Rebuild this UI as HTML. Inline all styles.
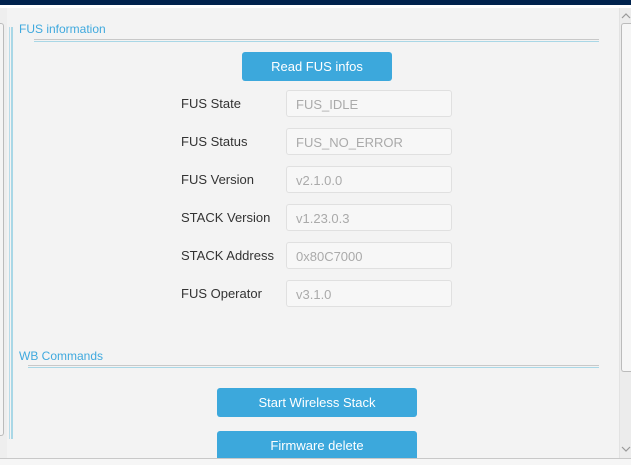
<!DOCTYPE html>
<html><head><style>
*{margin:0;padding:0;box-sizing:border-box}
body{width:631px;height:465px;overflow:hidden;background:#f3f3f3;font-family:"Liberation Sans",sans-serif;position:relative}
.a{position:absolute}
.lbl{position:absolute;left:181px;font-size:13px;color:#333}
.fld{position:absolute;left:286px;width:166px;height:27px;border:1px solid #e0e0e0;border-radius:3px;background:#f7f7f7;color:#aaa;font-size:13px;padding:6px 0 0 9px}
.btn{position:absolute;background:#3ca8dc;color:#fff;font-size:13px;text-align:center;border-radius:3px}
.hdr{position:absolute;left:19px;font-size:12px;color:#3fa9de}
</style></head><body>
<div class="a" style="left:0;top:0;width:631px;height:5px;background:#00224d"></div>
<div class="a" style="left:0;top:5px;width:631px;height:3px;background:#fff"></div>
<!-- left scroll -->
<div class="a" style="left:0;top:8px;width:7px;height:450px;background:#eee"></div>
<div class="a" style="left:0;top:23px;width:4px;height:413px;border:1px solid #bbb;border-left:none;border-radius:0 3px 3px 0;background:#f4f4f4"></div>
<!-- right scroll -->
<div class="a" style="left:619px;top:8px;width:12px;height:450px;background:#ececec;border-left:1px solid #e2e2e2"></div>
<svg class="a" style="left:621px;top:12px" width="10" height="8"><path d="M1 6 L5 2 L9 6" stroke="#999" fill="none" stroke-width="1.2"/></svg>
<div class="a" style="left:621px;top:23px;width:10px;height:349px;border:1px solid #bbb;border-right:none;border-radius:3px 0 0 3px;background:#f6f6f6"></div>
<svg class="a" style="left:621px;top:445px" width="10" height="8"><path d="M1 2 L5 6 L9 2" stroke="#999" fill="none" stroke-width="1.2"/></svg>
<!-- bottom -->
<div class="a" style="left:0;top:458px;width:631px;height:1px;background:#c8c8c8"></div>
<div class="a" style="left:0;top:459px;width:631px;height:6px;background:#f6f6f6"></div>
<!-- left blue bar -->
<div class="a" style="left:9px;top:27px;width:4px;height:412px;border-left:1px solid #b9dbe8;border-right:2px solid #a9d7e6"></div>
<div class="hdr" style="top:22px">FUS information</div>
<div class="a" style="left:34px;top:39px;width:565px;height:1px;background:#c8c8c8"></div>
<div class="a" style="left:34px;top:41px;width:565px;height:1px;background:#a9d7e6"></div>
<div class="btn" style="left:242px;top:52px;width:150px;height:29px;line-height:29px">Read FUS infos</div>
<div class="lbl" style="top:96px">FUS State</div><div class="fld" style="top:90px">FUS_IDLE</div>
<div class="lbl" style="top:134px">FUS Status</div><div class="fld" style="top:128px">FUS_NO_ERROR</div>
<div class="lbl" style="top:172px">FUS Version</div><div class="fld" style="top:166px">v2.1.0.0</div>
<div class="lbl" style="top:210px">STACK Version</div><div class="fld" style="top:204px">v1.23.0.3</div>
<div class="lbl" style="top:248px">STACK Address</div><div class="fld" style="top:242px">0x80C7000</div>
<div class="lbl" style="top:286px">FUS Operator</div><div class="fld" style="top:280px">v3.1.0</div>
<div class="hdr" style="top:349px">WB Commands</div>
<div class="a" style="left:28px;top:365px;width:571px;height:1px;background:#c8c8c8"></div>
<div class="a" style="left:28px;top:367px;width:571px;height:1px;background:#a9d7e6"></div>
<div class="btn" style="left:217px;top:388px;width:200px;height:29px;line-height:29px">Start Wireless Stack</div>
<div class="btn" style="left:217px;top:431px;width:200px;height:27px;line-height:29px;border-radius:3px 3px 0 0">Firmware delete</div>
</body></html>
